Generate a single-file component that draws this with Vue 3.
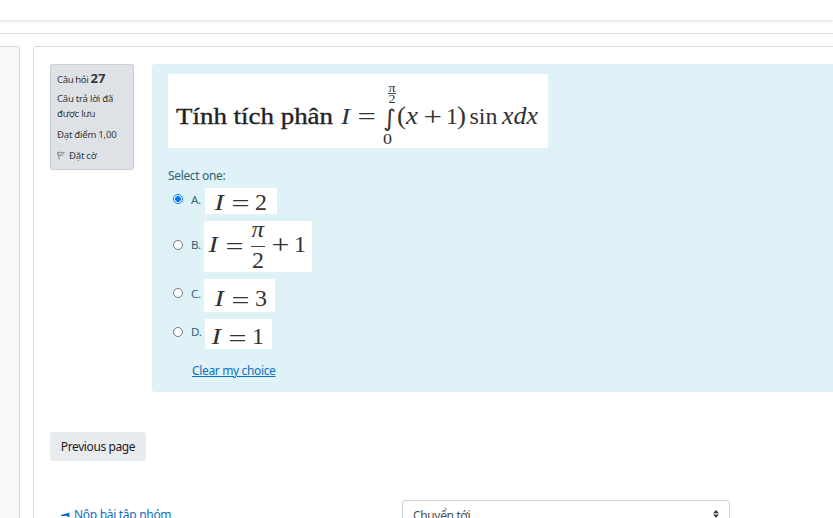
<script setup>
const question = {
  box: [168, 74, 380, 74],
  rules: [[388, 93.5, 396]],
  parts: [
    { t: 'Tính tích phân', x: 176, y: 123.5, s: 24, w: 157, bold: true },
    { t: 'I', x: 341, y: 123.5, s: 24, w: 9, i: true },
    { t: '=', x: 357.5, y: 125, s: 25, w: 18.5 },
    { t: '∫', x: 383, y: 126, s: 23, w: 13, sym: true },
    { t: 'π', x: 388.5, y: 91.5, s: 12, w: 7 },
    { t: '2', x: 388.5, y: 103, s: 12, w: 7 },
    { t: '0', x: 383, y: 144, s: 15.5, w: 9 },
    { t: '(', x: 397, y: 124, s: 25, w: 9 },
    { t: 'x', x: 406, y: 123.5, s: 25, w: 12, i: true },
    { t: '+', x: 423.5, y: 125.5, s: 27, w: 18.5 },
    { t: '1', x: 446, y: 123.5, s: 24, w: 12 },
    { t: ')', x: 457, y: 124, s: 25, w: 9 },
    { t: 'sin', x: 469.5, y: 123.5, s: 24, w: 28 },
    { t: 'xdx', x: 502, y: 123.5, s: 25, w: 36, i: true }
  ]
}

const simple = (box, x, base, digit) => ({
  box,
  rules: [],
  parts: [
    { t: 'I', x: x, y: base, s: 24, w: 9.5, i: true },
    { t: '=', x: x + 17, y: base + 1.5, s: 24, w: 18 },
    { t: digit, x: x + 40.5, y: base, s: 24, w: 12 }
  ]
})

const answers = [
  { key: 'a', letter: 'A.', math: simple([205, 188, 72, 26], 214.5, 209.5, '2') },
  {
    key: 'b',
    letter: 'B.',
    math: {
      box: [204, 221, 108, 51],
      rules: [[251, 246.5, 265]],
      parts: [
        { t: 'I', x: 208.5, y: 252, s: 24, w: 9.5, i: true },
        { t: '=', x: 225.5, y: 253.5, s: 24, w: 18 },
        { t: 'π', x: 251.5, y: 237, s: 24, w: 12.5, i: true },
        { t: '2', x: 252, y: 268, s: 24, w: 12 },
        { t: '+', x: 271.5, y: 254, s: 27, w: 18 },
        { t: '1', x: 294, y: 252, s: 24, w: 12 }
      ]
    }
  },
  { key: 'c', letter: 'C.', math: simple([204, 279, 71, 33], 214.5, 306, '3') },
  { key: 'd', letter: 'D.', math: simple([205, 319, 67, 30], 211.5, 344, '1') }
]
</script>

<template>
  <div class="page">
    <header class="topbar"></header>
    <div class="rule"></div>
    <div class="columns">
      <aside class="drawer"></aside>
      <main class="content">
        <section class="question">
          <div class="info">
            <h3 class="no"><span class="w-no">Câu hỏi</span> <b>27</b></h3>
            <div class="state">Câu trả lời đã<br>được lưu</div>
            <div class="grade">Đạt điểm 1,00</div>
            <div class="flag">
              <svg width="8" height="9" viewBox="0 0 8 9">
                <path d="M.5 1 2.3 8.5" stroke="#858b90" fill="none" />
                <path d="M.8 1.2 7.5 1.5 5.3 3 5.5 4.3 1.8 5Z" fill="#c9cccf" stroke="#858b90" stroke-width=".8" />
              </svg>
              <span>Đặt cờ</span>
            </div>
          </div>
          <div class="formulation">
            <svg class="math" :width="question.box[2]" :height="question.box[3]" :viewBox="question.box.join(' ')">
              <text v-for="(p, n) in question.parts" :key="n" :x="p.x" :y="p.y" :font-size="p.s" :textLength="p.w"
                lengthAdjust="spacingAndGlyphs" :class="{ it: p.i, heavy: p.bold, sym: p.sym }">{{ p.t }}</text>
              <line v-for="(r, n) in question.rules" :key="'r' + n" :x1="r[0]" :x2="r[2]" :y1="r[1]" :y2="r[1]" />
            </svg>
            <div class="prompt"><span>Select one:</span></div>
            <div v-for="a in answers" :key="a.key" class="answer" :class="'answer-' + a.key">
              <span class="radio" :class="{ on: a.key === 'a' }"></span>
              <span class="letter">{{ a.letter }}</span>
              <svg class="math" :width="a.math.box[2]" :height="a.math.box[3]" :viewBox="a.math.box.join(' ')">
                <text v-for="(p, n) in a.math.parts" :key="n" :x="p.x" :y="p.y" :font-size="p.s" :textLength="p.w"
                  lengthAdjust="spacingAndGlyphs" :class="{ it: p.i }">{{ p.t }}</text>
                <line v-for="(r, n) in a.math.rules" :key="'r' + n" :x1="r[0]" :x2="r[2]" :y1="r[1]" :y2="r[1]" />
              </svg>
            </div>
            <a class="clear">Clear my choice</a>
          </div>
        </section>
        <button class="previous">Previous page</button>
        <nav class="jump">
          <a class="prev-link">
            <svg width="9" height="6" viewBox="0 0 9 6"><path d="M0 3 8.5 .5V5H6.5V4H0Z" fill="#0f6fc5" /></svg>
            <span>Nộp bài tập nhóm</span>
          </a>
          <div class="select">
            <span>Chuyển tới</span>
            <svg width="6" height="8" viewBox="0 0 6 8"><path d="M3 0 6 3.2H0ZM0 4.6H6L3 7.8Z" fill="#343a40" /></svg>
          </div>
        </nav>
      </main>
    </div>
  </div>
</template>

<style>
body { margin: 0; overflow: hidden; background: #fff; }
</style>

<style scoped>
.page {
  width: 833px;
  height: 518px;
  overflow: hidden;
  display: flex;
  flex-direction: column;
  box-sizing: border-box;
  font-family: "Noto Sans", "Open Sans", sans-serif;
  font-size: 12px;
  color: #343a40;
}
.page * { box-sizing: border-box; }
.topbar { flex: none; height: 20px; background: #fff; box-shadow: 0 1px 3px rgba(0, 0, 0, .14); }
.rule { flex: none; height: 14px; border-bottom: 1px solid #dee2e6; }
.columns { display: flex; flex: none; height: 500px; padding-top: 12px; }
.drawer { flex: none; width: 20px; background: #f8f9fa; border: 1px solid #d5d8db; border-left: 0; border-top-right-radius: 3px; }
.content { flex: none; width: 850px; margin-left: 13px; padding: 17px 0 0 16px; border: 1px solid #d9dbde; border-top-left-radius: 3px; }
.question { display: flex; gap: 18px; align-items: flex-start; }
.info { width: 84px; height: 106px; padding: 6px 0 0 6px; background: #dee2e6; border: 1px solid #cad0d7; border-radius: 2px; font-size: 9.6px; line-height: 15px; white-space: nowrap; letter-spacing: -.25px; }
.no { margin: 0; font-size: 9.6px; font-weight: 400; line-height: 15px; letter-spacing: -.4px; }
.no b { font-size: 13px; letter-spacing: .2px; }
.state { margin-top: 4px; }
.grade { margin-top: 6px; }
.flag { display: flex; align-items: center; gap: 4px; margin-top: 6px; }
.formulation { width: 700px; height: 328px; padding: 10px 0 0 16px; background: #def2f8; border-radius: 3px; color: #2f6473; display: flex; flex-direction: column; align-items: flex-start; }
.math { display: block; flex: none; overflow: visible; background: #fff; font-family: "Liberation Serif", serif; }
.math text { fill: #333; }
.math .it { font-style: italic; }
.math .heavy { fill: #222; stroke: #222; stroke-width: .35px; }
.math .sym { font-family: "DejaVu Sans", sans-serif; }
.math line { stroke: #444; stroke-width: 1; }
.prompt { height: 16px; margin-top: 20px; line-height: 16px; font-size: 12px; letter-spacing: -.35px; }
.answer { display: flex; align-items: flex-start; margin-left: 5px; }
.radio { flex: none; width: 10px; height: 10px; border: 1px solid #767676; border-radius: 50%; background: #fff; }
.radio.on { border-color: #0075ff; background: radial-gradient(circle, #0075ff 0 2.6px, #fff 3.2px); }
.letter { flex: none; width: 14px; margin-left: 8px; font-size: 11.6px; line-height: 16px; letter-spacing: -.3px; }
.answer-a { height: 26px; margin-top: 4px; }
.answer-a .radio { margin-top: 6px; }
.answer-a .letter { margin-top: 4px; }
.answer-b { height: 51px; margin-top: 7px; }
.answer-b .radio { margin-top: 19px; }
.answer-b .letter { margin-top: 16px; width: 13px; }
.answer-c { height: 33px; margin-top: 7px; }
.answer-c .radio { margin-top: 9px; }
.answer-c .letter { margin-top: 7px; width: 13px; }
.answer-d { height: 30px; margin-top: 7px; }
.answer-d .radio { margin-top: 8px; }
.answer-d .letter { margin-top: 5px; }
.clear { margin: 14px 0 0 24px; line-height: 16px; font-size: 12px; letter-spacing: -.35px; color: #0f6fc5; text-decoration: underline; }
.previous { display: block; width: 96px; height: 29px; margin: 40px 0 0; padding: 0; border: 0; border-radius: 3px; background: #e9ecef; color: #1d2125; font: 12px/29px "Noto Sans", sans-serif; letter-spacing: -.4px; white-space: nowrap; }
.jump { display: flex; margin-top: 39px; }
.prev-link { display: flex; flex: none; align-items: flex-start; gap: 4px; width: 341px; margin-left: 11px; padding-top: 7px; line-height: 16px; letter-spacing: -.3px; color: #0f6fc5; }
.prev-link svg { margin-top: 5px; }
.select { display: flex; flex: none; align-items: flex-start; justify-content: space-between; width: 328px; height: 34px; padding: 7px 10px; border: 1px solid #ced4da; border-radius: 3px; line-height: 16px; letter-spacing: -.35px; color: #495057; }
.select svg { margin-top: 2px; }
</style>
